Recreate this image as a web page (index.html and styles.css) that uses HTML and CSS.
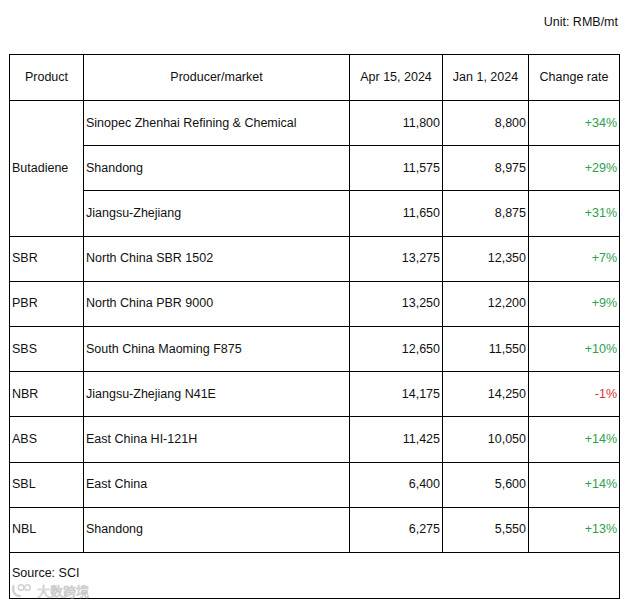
FILE: index.html
```html
<!DOCTYPE html>
<html>
<head>
<meta charset="utf-8">
<link rel="stylesheet" href="styles.css">
</head>
<body>
<div class="unit">Unit: RMB/mt</div>
<table class="price-table">
  <colgroup>
    <col class="c-product">
    <col class="c-producer">
    <col class="c-apr">
    <col class="c-jan">
    <col class="c-rate">
  </colgroup>
  <thead>
    <tr>
      <th>Product</th>
      <th>Producer/market</th>
      <th>Apr 15, 2024</th>
      <th>Jan 1, 2024</th>
      <th>Change rate</th>
    </tr>
  </thead>
  <tbody>
    <tr>
      <td rowspan="3">Butadiene</td>
      <td>Sinopec Zhenhai Refining &amp; Chemical</td>
      <td class="num">11,800</td>
      <td class="num">8,800</td>
      <td class="num up">+34%</td>
    </tr>
    <tr>
      <td>Shandong</td>
      <td class="num">11,575</td>
      <td class="num">8,975</td>
      <td class="num up">+29%</td>
    </tr>
    <tr>
      <td>Jiangsu-Zhejiang</td>
      <td class="num">11,650</td>
      <td class="num">8,875</td>
      <td class="num up">+31%</td>
    </tr>
    <tr>
      <td>SBR</td>
      <td>North China SBR 1502</td>
      <td class="num">13,275</td>
      <td class="num">12,350</td>
      <td class="num up">+7%</td>
    </tr>
    <tr>
      <td>PBR</td>
      <td>North China PBR 9000</td>
      <td class="num">13,250</td>
      <td class="num">12,200</td>
      <td class="num up">+9%</td>
    </tr>
    <tr>
      <td>SBS</td>
      <td>South China Maoming F875</td>
      <td class="num">12,650</td>
      <td class="num">11,550</td>
      <td class="num up">+10%</td>
    </tr>
    <tr>
      <td>NBR</td>
      <td>Jiangsu-Zhejiang N41E</td>
      <td class="num">14,175</td>
      <td class="num">14,250</td>
      <td class="num down">-1%</td>
    </tr>
    <tr>
      <td>ABS</td>
      <td>East China HI-121H</td>
      <td class="num">11,425</td>
      <td class="num">10,050</td>
      <td class="num up">+14%</td>
    </tr>
    <tr>
      <td>SBL</td>
      <td>East China</td>
      <td class="num">6,400</td>
      <td class="num">5,600</td>
      <td class="num up">+14%</td>
    </tr>
    <tr>
      <td>NBL</td>
      <td>Shandong</td>
      <td class="num">6,275</td>
      <td class="num">5,550</td>
      <td class="num up">+13%</td>
    </tr>
    <tr>
      <td colspan="5" class="source">
        <div class="source-text">Source: SCI</div>
        <div class="watermark">
          <svg class="wm-icon" width="22" height="15" viewBox="0 0 22 15">
            <path d="M2.5 3 C1 8 3.5 13 9 13" fill="none" stroke="#d0d0d0" stroke-width="2.2" stroke-linecap="round"/>
            <circle cx="10" cy="4.5" r="2.8" fill="none" stroke="#d0d0d0" stroke-width="1.4"/>
            <circle cx="16.5" cy="4.5" r="2.8" fill="none" stroke="#d0d0d0" stroke-width="1.4"/>
          </svg>
          <span class="wm-text">大数跨境</span>
        </div>
      </td>
    </tr>
  </tbody>
</table>
</body>
</html>
```

FILE: styles.css
```css
html, body {
  margin: 0;
  padding: 0;
  background: #ffffff;
}

body {
  font-family: "Liberation Sans", Arial, sans-serif;
  font-size: 12.5px;
  color: #111111;
}

.unit {
  height: 54px;
  box-sizing: border-box;
  padding-top: 14px;
  padding-right: 10px;
  text-align: right;
  line-height: 16px;
}

.price-table {
  margin-left: 9px;
  border-collapse: collapse;
  table-layout: fixed;
  width: 610px;
}

.c-product { width: 74px; }
.c-producer { width: 266px; }
.c-apr { width: 93px; }
.c-jan { width: 86px; }
.c-rate { width: 91px; }

.price-table th,
.price-table td {
  border: 1px solid #000000;
  height: 44.2px;
  padding: 0 2px;
  vertical-align: middle;
  line-height: 15px;
  white-space: nowrap;
}

.price-table th {
  height: 45px;
  font-weight: normal;
  text-align: center;
}

.price-table td {
  text-align: left;
}

.price-table td.num {
  text-align: right;
}

.up { color: #2f9e4e; }
.down { color: #e0303c; }

.price-table td.source {
  position: relative;
  height: 41px;
  padding-bottom: 4px;
}

.watermark {
  position: absolute;
  left: 1px;
  bottom: 0;
  display: flex;
  align-items: center;
  gap: 4px;
}

.wm-text {
  font-family: "Noto Sans CJK SC", sans-serif;
  font-size: 13px;
  line-height: 15px;
  color: #f4f4f4;
  -webkit-text-stroke: 0.7px #c8c8c8;
}
```
